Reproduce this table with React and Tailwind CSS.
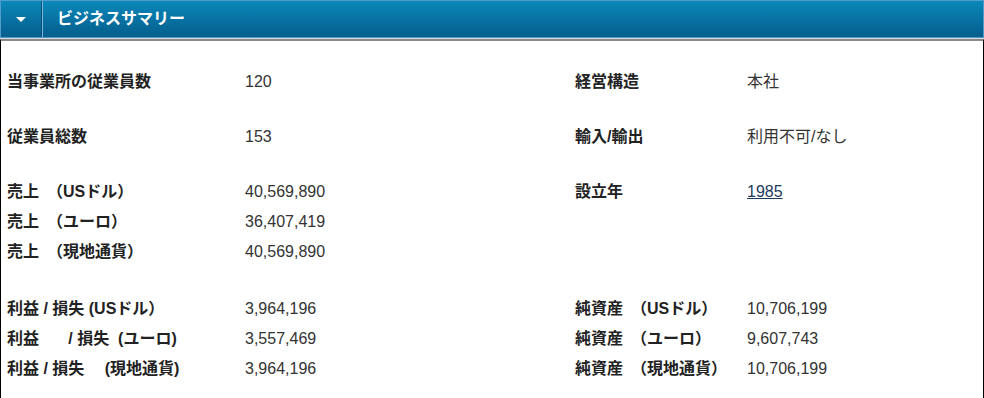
const rows = [
  { h: "h-[55px]", l: "当事業所の従業員数", v: "120", rl: "経営構造", rv: "本社" },
  { h: "h-[55px]", l: "従業員総数", v: "153", rl: "輸入/輸出", rv: "利用不可/なし" },
  { h: "h-[30px]", l: "売上　（USドル）", v: "40,569,890", rl: "設立年", rv: "1985", link: true },
  { h: "h-[30px]", l: "売上　（ユーロ）", v: "36,407,419" },
  { h: "h-[57px]", l: "売上　（現地通貨）", v: "40,569,890" },
  { h: "h-[30px]", l: "利益 / 損失 (USドル）", v: "3,964,196", rl: "純資産　（USドル）", rv: "10,706,199" },
  { h: "h-[30px]", l: "利益　   / 損失  (ユーロ)", v: "3,557,469", rl: "純資産　（ユーロ）", rv: "9,607,743" },
  { h: "h-[30px]", l: "利益 / 損失　 (現地通貨)", v: "3,964,196", rl: "純資産　（現地通貨）", rv: "10,706,199" },
];

export default function App() {
  return (
    <div className="w-[984px] h-[398px] overflow-hidden bg-white font-['Liberation_Sans','Noto_Sans_CJK_JP',sans-serif]">
      <div className="flex h-[38px] border border-[#4f9dc8] bg-linear-to-b from-[#0b88bb] to-[#055e8c]">
        <div className="w-[41px] flex items-center justify-center border-r border-[#06507a]">
          <div className="w-0 h-0 border-l-[5px] border-r-[5px] border-t-[5px] border-l-transparent border-r-transparent border-t-white mt-px" />
        </div>
        <div className="flex-1 flex items-center border-l border-[#7ab6d8] pl-[14px]">
          <span className="text-white font-bold text-[16px] leading-5">ビジネスサマリー</span>
        </div>
      </div>
      <div className="h-px bg-[#d8d8d8]" />
      <div className="border-t-2 border-[#8a8a8a] border-x border-x-black h-[360px] pt-[31px] pl-[6px]">
        {rows.map((r, i) => (
          <div key={i} className={`grid grid-cols-[238px_330px_172px_1fr] ${r.h} text-[16px] leading-5`}>
            <div className="font-bold text-[#222] whitespace-pre">{r.l}</div>
            <div className="text-[#333]">{r.v}</div>
            <div className="font-bold text-[#222] whitespace-pre">{r.rl}</div>
            <div className="text-[#333]">
              {r.link ? <a href="#" className="underline text-[#1d3a5f]">{r.rv}</a> : r.rv}
            </div>
          </div>
        ))}
      </div>
    </div>
  );
}
